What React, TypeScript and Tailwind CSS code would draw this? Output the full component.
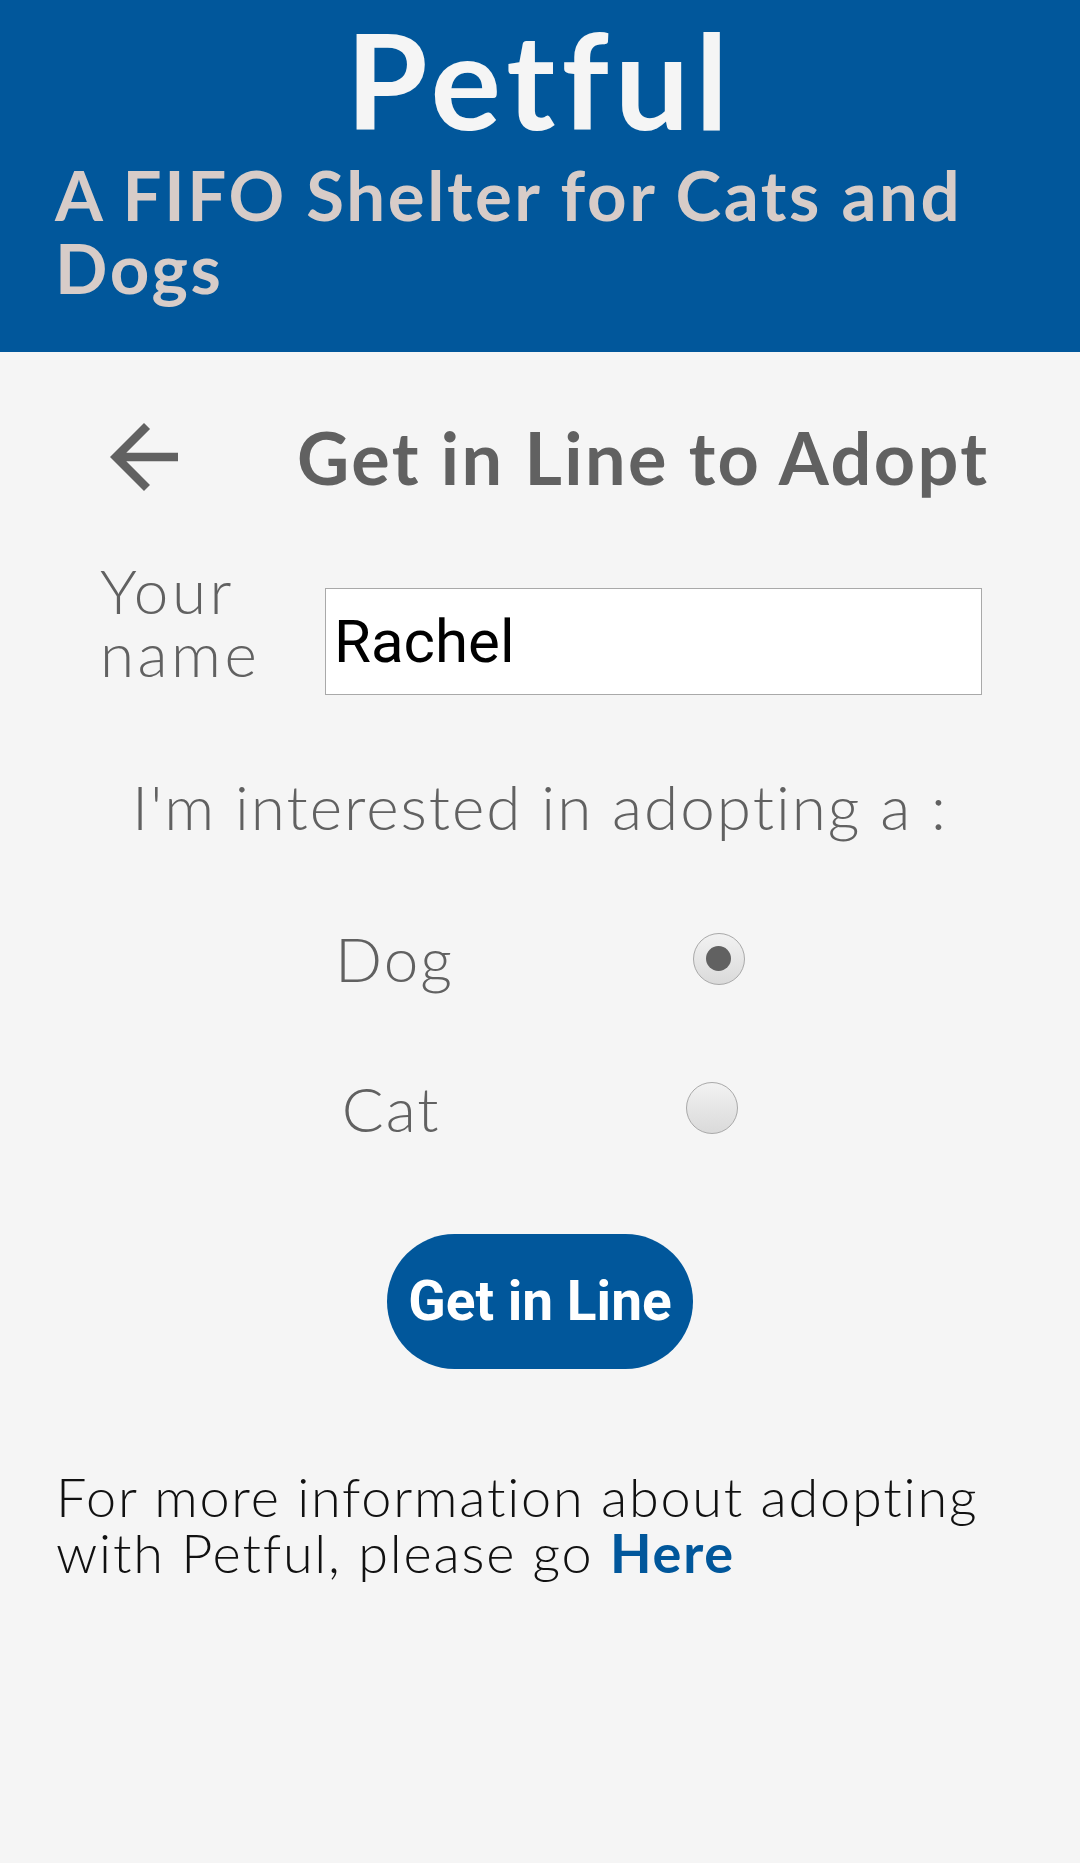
import { useState } from "react";

function BackArrow() {
  return (
    <svg width="102" height="102" viewBox="0 0 24 24" fill="#616161" aria-hidden="true">
      <path d="M20 11H7.83l5.59-5.59L12 4l-8 8 8 8 1.41-1.41L7.83 13H20v-2z" />
    </svg>
  );
}

function Radio({ checked }: { checked: boolean }) {
  return (
    <span className="flex h-[52px] w-[52px] items-center justify-center rounded-full border border-[#a9a9a9] bg-gradient-to-b from-[#f2f2f2] to-[#dadada]">
      {checked && <span className="h-[25px] w-[25px] rounded-full bg-[#616161]" />}
    </span>
  );
}

export default function App() {
  const [pet, setPet] = useState("dog");
  const [name, setName] = useState("Rachel");

  return (
    <div className="min-h-[1863px] bg-[#f5f5f5] font-['Lato',sans-serif] leading-[1.2]">
      {/* header */}
      <header className="h-[352px] bg-[#01579b]">
        <h1 className="text-center text-[132px] font-bold leading-[1.2] tracking-[6px] text-[#f5f5f5]">Petful</h1>
        <h2 className="pl-[55px] pr-[40px] text-[69px] font-bold leading-[73px] tracking-[2.6px] text-[#d7ccc8]">
          A FIFO Shelter for Cats and Dogs
        </h2>
      </header>

      <main>
        <div className="mt-[54px] flex items-center gap-[102px] pl-[93px]">
          <button className="flex">
            <BackArrow />
          </button>
          <h3 className="text-[72px] font-bold leading-[1.2] tracking-[2.4px] text-[#616161]">Get in Line to Adopt</h3>
        </div>

        <div className="mt-[51px] flex items-start pl-[100px]">
          <label
            htmlFor="name"
            className="w-[225px] text-[62px] font-light leading-[63px] tracking-[3.5px] text-[#616161]"
          >
            Your name
          </label>
          <input
            id="name"
            value={name}
            onChange={(e) => setName(e.target.value)}
            className="mt-[29px] h-[107px] w-[657px] border border-[#a9a9a9] bg-white px-[8px] font-['Roboto',sans-serif] text-[60px] text-black outline-none"
          />
        </div>

        <p className="mt-[74px] text-center text-[62px] font-light leading-[1.2] tracking-[2px] text-[#616161]">
          I'm interested in adopting a :
        </p>

        <div className="mx-auto w-[888px]">
          {[
            { id: "dog", label: "Dog" },
            { id: "cat", label: "Cat" },
          ].map((o, i) => (
            <label
              key={o.id}
              onClick={() => setPet(o.id)}
              className={`flex cursor-pointer items-center justify-evenly ${i === 0 ? "mt-[78px]" : "mt-[75px]"}`}
            >
              <span className="text-[62px] font-light leading-[1.2] tracking-[2px] text-[#616161]">{o.label}</span>
              <Radio checked={pet === o.id} />
            </label>
          ))}
        </div>

        <div className="mt-[89px] flex justify-center">
          <button className="rounded-full bg-[#01579b] px-[21px] py-[37px] font-['Roboto',sans-serif] text-[55px] font-bold leading-[61px] text-white">
            Get in Line
          </button>
        </div>

        <p className="mt-[100px] px-[56px] text-[54px] font-light leading-[56px] tracking-[1.8px] text-[#111]">
          For more information about adopting with Petful, please go{" "}
          <a href="#" className="font-bold text-[#01579b]">
            Here
          </a>
        </p>
      </main>
    </div>
  );
}
